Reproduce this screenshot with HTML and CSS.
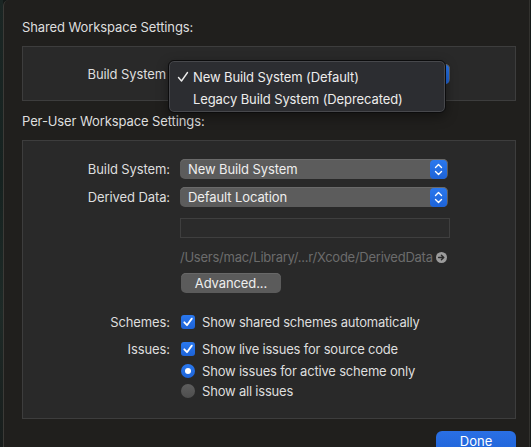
FILE: index.html
```html
<!DOCTYPE html>
<html>
<head>
<meta charset="utf-8">
<link rel="stylesheet" href="styles.css">
</head>
<body>
<div class="desk">
  <div class="behind"></div>
  <div class="sheet">
    <div class="heading">Shared Workspace Settings:</div>
    <div class="box box-shared">
      <div class="grid">
        <div class="label label-covered">Build System</div>
        <div class="popup popup-hidden">
          <span class="popup-text"></span>
          <span class="stepper"><svg width="17" height="19" viewBox="0 0 17 19"><polyline points="5.5,7.5 8.5,4.5 11.5,7.5" /><polyline points="5.5,11.5 8.5,14.5 11.5,11.5" /></svg></span>
        </div>
      </div>
      <div class="menu">
        <div class="menu-item"><svg class="tick" width="12" height="12" viewBox="0 0 12 12"><polyline points="1.5,6.5 4.5,10 10.5,1.5" /></svg>New Build System (Default)</div>
        <div class="menu-item">Legacy Build System (Deprecated)</div>
      </div>
    </div>

    <div class="heading heading-second">Per-User Workspace Settings:</div>
    <div class="box box-user">
      <div class="grid">
        <div class="label">Build System:</div>
        <div class="popup">
          <span class="popup-text">New Build System</span>
          <span class="stepper"><svg width="17" height="19" viewBox="0 0 17 19"><polyline points="5.5,7.5 8.5,4.5 11.5,7.5" /><polyline points="5.5,11.5 8.5,14.5 11.5,11.5" /></svg></span>
        </div>

        <div class="label row-derived">Derived Data:</div>
        <div class="popup row-derived">
          <span class="popup-text">Default Location</span>
          <span class="stepper"><svg width="17" height="19" viewBox="0 0 17 19"><polyline points="5.5,7.5 8.5,4.5 11.5,7.5" /><polyline points="5.5,11.5 8.5,14.5 11.5,11.5" /></svg></span>
        </div>

        <div class="spacer"></div>
        <div class="field"></div>

        <div class="spacer"></div>
        <div class="path">
          <span>/Users/mac/Library/...r/Xcode/DerivedData</span>
          <svg class="go" width="11" height="11" viewBox="0 0 11 11"><circle cx="5.5" cy="5.5" r="5.5" /><path d="M2.6 5.5 H7.6 M5.4 3.2 L7.8 5.5 L5.4 7.8" /></svg>
        </div>

        <div class="spacer"></div>
        <div class="btn-row"><div class="button">Advanced...</div></div>

        <div class="label row-schemes">Schemes:</div>
        <div class="option row-schemes"><span class="checkbox"><svg width="14" height="14" viewBox="0 0 14 14"><polyline points="3.3,7.3 6,10.2 10.8,3.6" /></svg></span>Show shared schemes automatically</div>

        <div class="label row-issues">Issues:</div>
        <div class="option row-issues"><span class="checkbox"><svg width="14" height="14" viewBox="0 0 14 14"><polyline points="3.3,7.3 6,10.2 10.8,3.6" /></svg></span>Show live issues for source code</div>

        <div class="spacer row-radio1"></div>
        <div class="option row-radio1"><span class="radio on"></span>Show issues for active scheme only</div>

        <div class="spacer row-radio2"></div>
        <div class="option row-radio2"><span class="radio"></span>Show all issues</div>
      </div>
    </div>

    <div class="footer"><div class="done">Done</div></div>
  </div>
</div>
</body>
</html>
```

FILE: styles.css
```css
* { box-sizing: border-box; }
html, body { margin: 0; padding: 0; }
body {
  width: 531px;
  height: 447px;
  overflow: hidden;
  background: #141918;
  font-family: "Inter", "Roboto", "Liberation Sans", sans-serif;
  font-size: 13px;
  color: #dedede;
}
.desk {
  display: flex;
  height: 447px;
  overflow: hidden;
}
.behind {
  width: 3px;
  flex-shrink: 0;
  background: linear-gradient(#1b2624, #162220 40%, #1e2a27 70%, #181d1c);
}
.sheet {
  flex: 1;
  margin-right: 1px;
  background: #201f1d;
  border-left: 1px solid #3b3a37;
  border-right: 1px solid #33322f;
  border-top-left-radius: 6px;
  padding: 19px 13px 0 18px;
  display: flex;
  flex-direction: column;
  overflow: hidden;
}
.sheet > * { flex-shrink: 0; }
.heading {
  height: 16px;
  line-height: 16px;
  letter-spacing: -0.1px;
}
.heading-second { margin-top: 12px; }
.box {
  position: relative;
  margin-top: 11px;
  background: #292929;
  border: 1px solid #3d3d3d;
}
.box-shared {
  height: 55px;
  padding-top: 17px;
}
.box-user {
  height: 279px;
  padding-top: 18px;
}
.grid {
  display: grid;
  grid-template-columns: 147px 268px;
  column-gap: 10px;
  align-items: center;
}
.label {
  text-align: right;
  line-height: 20px;
  letter-spacing: -0.1px;
  white-space: nowrap;
}
.label-covered { padding-right: 4px; }
.popup {
  position: relative;
  height: 20px;
  border-radius: 5px;
  background: #5c5c5c;
  box-shadow: inset 0 1px 0 #6a6a6a;
  display: flex;
  align-items: center;
  justify-content: space-between;
  padding-left: 8px;
  color: #eeeeee;
  letter-spacing: -0.1px;
}
.popup-hidden { margin-left: 2px; width: 268px; }
.stepper {
  width: 17px;
  height: 19px;
  margin-right: 1px;
  border-radius: 4px;
  background: linear-gradient(#2a78ee, #1d63d8);
  display: flex;
}
.stepper polyline {
  fill: none;
  stroke: #ffffff;
  stroke-width: 1.4;
  stroke-linecap: round;
  stroke-linejoin: round;
}
.row-derived { margin-top: 8px; }
.spacer { height: 1px; }
.field {
  margin-top: 11px;
  height: 20px;
  width: 270px;
  background: #2b2b2b;
  border: 1px solid #3f3f3f;
}
.path {
  margin-top: 11px;
  height: 16px;
  line-height: 16px;
  display: flex;
  align-items: center;
  gap: 3px;
  color: #6c6c6c;
  white-space: nowrap;
  letter-spacing: -0.25px;
}
.go circle { fill: #9c9c9c; }
.go path {
  fill: none;
  stroke: #2a2a2a;
  stroke-width: 1.4;
  stroke-linecap: round;
  stroke-linejoin: round;
}
.btn-row { margin-top: 8px; display: flex; }
.button {
  width: 100px;
  height: 20px;
  margin-left: 1px;
  border-radius: 5px;
  background: #5b5b5b;
  box-shadow: inset 0 1px 0 #686868;
  text-align: center;
  line-height: 20px;
  color: #eeeeee;
  letter-spacing: -0.1px;
}
.option {
  display: flex;
  align-items: center;
  gap: 7px;
  height: 20px;
  padding-left: 1px;
  white-space: nowrap;
  letter-spacing: -0.2px;
}
.row-schemes { margin-top: 19px; }
.row-issues { margin-top: 7px; }
.row-radio1 { margin-top: 2px; }
.row-radio2 { margin-top: 0; }
.checkbox {
  width: 14px;
  height: 14px;
  border-radius: 3px;
  background: linear-gradient(#2a78ee, #1d63d8);
  display: flex;
}
.checkbox polyline {
  fill: none;
  stroke: #ffffff;
  stroke-width: 1.8;
  stroke-linecap: round;
  stroke-linejoin: round;
}
.radio {
  width: 14px;
  height: 14px;
  border-radius: 50%;
  background: linear-gradient(#5e5e5e, #4e4e4e);
  display: flex;
  align-items: center;
  justify-content: center;
}
.radio.on { background: linear-gradient(#2a78ee, #1d63d8); }
.radio.on::after {
  content: "";
  width: 6px;
  height: 6px;
  border-radius: 50%;
  background: #ffffff;
}
.menu {
  position: absolute;
  left: 145px;
  top: 13px;
  width: 278px;
  height: 53px;
  padding-top: 5px;
  border-radius: 6px;
  background: #2c2d31;
  border: 1px solid #0c0c0d;
  box-shadow: inset 0 0 0 1px #47484c, 0 4px 12px rgba(0,0,0,0.4);
  color: #ececec;
}
.menu-item {
  position: relative;
  height: 22px;
  line-height: 22px;
  padding-left: 24px;
  letter-spacing: -0.1px;
}
.tick {
  position: absolute;
  left: 8px;
  top: 5px;
}
.tick polyline {
  fill: none;
  stroke: #ececec;
  stroke-width: 1.4;
  stroke-linecap: round;
  stroke-linejoin: round;
}
.footer {
  margin-top: 12px;
  display: flex;
  justify-content: flex-end;
}
.done {
  width: 80px;
  height: 24px;
  border-radius: 6px;
  background: linear-gradient(#2a6fe4, #1f63d8);
  color: #ffffff;
  text-align: center;
  padding-top: 2px;
  line-height: 16px;
}
```
